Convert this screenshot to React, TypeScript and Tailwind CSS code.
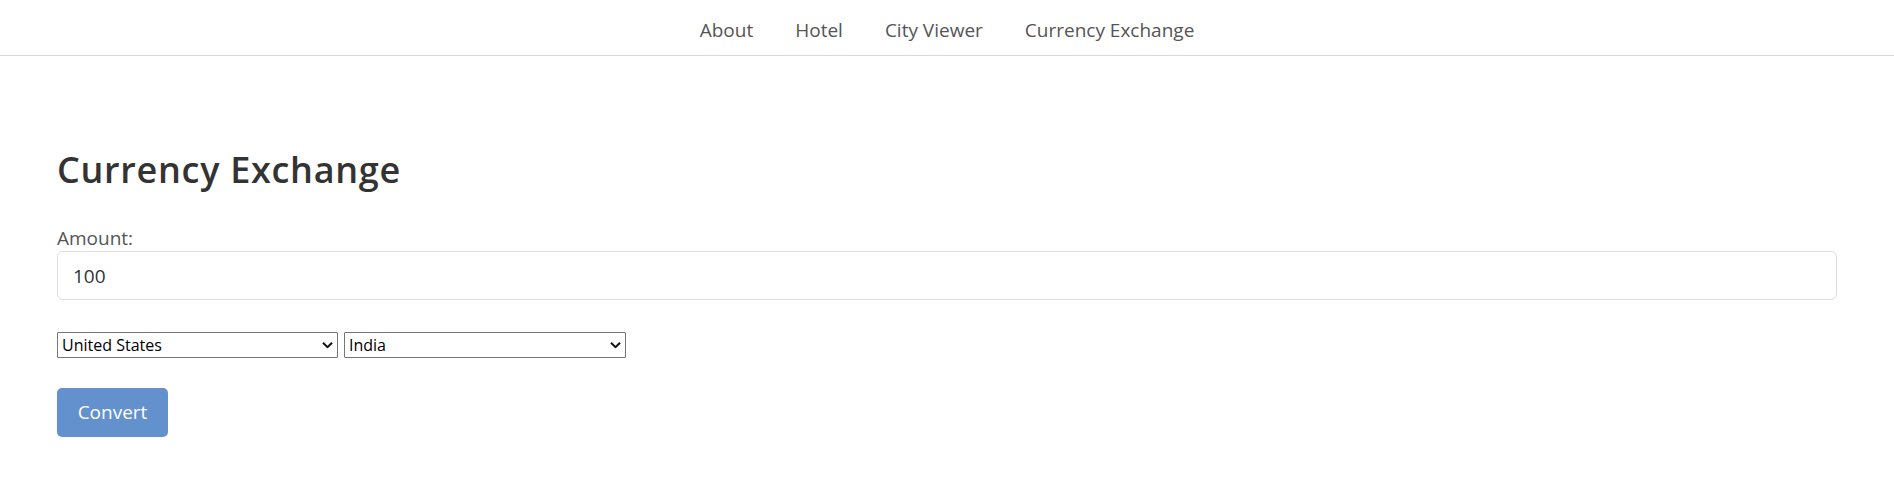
function Chevron() {
  return (
    <svg
      className="pointer-events-none absolute top-1/2 right-[5px] -translate-y-1/2"
      width="11"
      height="7"
      viewBox="0 0 11 7"
      fill="none"
    >
      <path d="M1 1.2l4.5 4.5L10 1.2" stroke="#111" strokeWidth="2" />
    </svg>
  );
}

function Select({ value, width }: { value: string; width: string }) {
  return (
    <div className={`relative ${width}`}>
      <select className="h-[26px] w-full appearance-none rounded-[1px] border border-[#767676] bg-white pr-[24px] pl-[4px] font-['Open_Sans',sans-serif] text-[16px] leading-[22px] text-black outline-none">
        <option>{value}</option>
      </select>
      <Chevron />
    </div>
  );
}

export default function App() {
  const links = ["About", "Hotel", "City Viewer", "Currency Exchange"];
  return (
    <div className="min-h-screen bg-white font-['Open_Sans',sans-serif] text-[#333]">
      <nav className="flex h-[56px] items-center justify-center border-b border-[#dadada]">
        {links.map((l) => (
          <a key={l} href="#" className="px-[21px] pt-[5px] text-[19px] text-[#555]">
            {l}
          </a>
        ))}
      </nav>
      <main className="px-[57px] pt-[93px]">
        <h2 className="mb-[36px] text-[36px] leading-[42px] font-semibold tracking-[0.7px] text-[#333]">
          Currency Exchange
        </h2>
        <label className="block text-[19px] leading-[23px] text-[#555]">Amount:</label>
        <input
          type="text"
          defaultValue="100"
          className="mt-[1px] block h-[49px] w-full rounded-[6px] border border-[#dcdcdc] px-[15px] text-[19px] text-[#333] outline-none"
        />
        <div className="mt-[32px] flex gap-[6px]">
          <Select value="United States" width="w-[281px]" />
          <Select value="India" width="w-[282px]" />
        </div>
        <button className="mt-[30px] h-[49px] w-[111px] rounded-[5px] bg-[#6391cd] text-[19px] text-white">
          Convert
        </button>
      </main>
    </div>
  );
}
